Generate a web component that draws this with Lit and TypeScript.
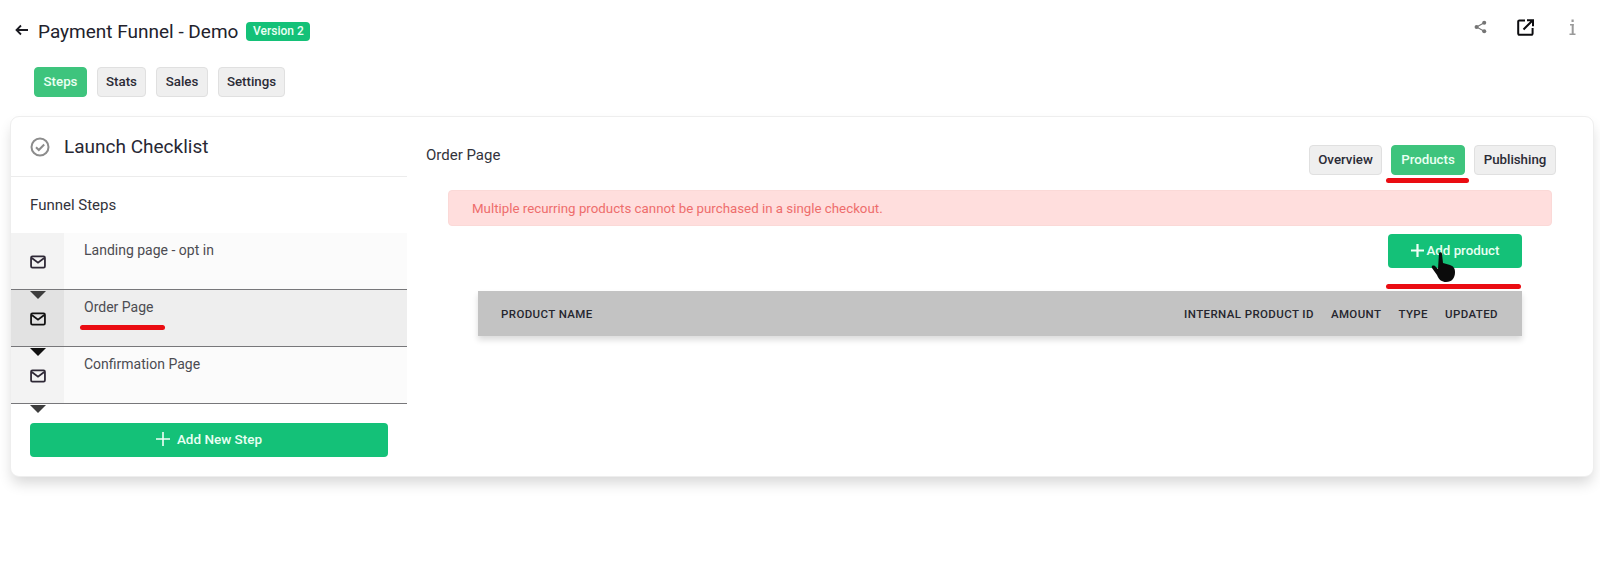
import { LitElement, css, html, svg } from "lit";
import { customElement } from "lit/decorators.js";

const mail = svg`<rect x="1.200" y="2.600" width="15.600" height="12.800" rx="1.500" fill="none" stroke="currentColor" stroke-width="2"/><path d="M2 4.500l7 5.200 7-5.200" fill="none" stroke="currentColor" stroke-width="2"/>`;

@customElement("app-root")
export class AppRoot extends LitElement {
  static styles = css`
    :host {
      display: block;
      height: 582px;
      background: #fff;
      font-family: Roboto, "Liberation Sans", sans-serif;
      color: #2a2a33;
      overflow: hidden;
    }
    .top {
      display: flex;
      align-items: center;
      height: 62px;
      padding: 0 0 0 15px;
    }
    .back { width: 13px; height: 12px; margin: -2px 10px 0 0; }
    .title { font-size: 19px; color: #22222c; }
    .badge {
      margin-left: 8px;
      height: 19px;
      width: 64px;
      border-radius: 4px;
      background: #14c178;
      color: #eafff4;
      font-size: 12px;
      font-weight: 500;
      display: flex;
      align-items: center;
      justify-content: center;
    }
    .top-icons {
      margin-left: auto;
      display: flex;
      align-items: center;
      padding-right: 24px;
      margin-top: -8px;
    }
    .share { margin-right: 30px; }
    .popout { margin-right: 35px; }
    .tabs { display: flex; gap: 10px; }
    .main-tabs { padding: 5px 0 0 34px; height: 50px; box-sizing: border-box; }
    .tab {
      height: 30px;
      box-sizing: border-box;
      padding-bottom: 2px;
      border: 1px solid #e0e0e0;
      border-radius: 4px;
      background: #efefef;
      color: #2b2b36;
      font-size: 13.300px;
      font-weight: 500;
      display: flex;
      align-items: center;
      justify-content: center;
    }
    .tab.on { background: #3ec47d; border-color: #3ec47d; color: #eafff2; }
    .card {
      position: relative;
      margin: 4px 6px 0 10px;
      height: 361px;
      box-sizing: border-box;
      border: 1px solid #eeeeee;
      border-radius: 9px;
      background: #fff;
      box-shadow: 0 8px 14px -2px rgba(0, 0, 0, 0.16);
      display: flex;
    }
    .left { width: 396px; flex: none; display: flex; flex-direction: column; }
    .check-head {
      display: flex;
      align-items: center;
      gap: 14px;
      height: 60px;
      box-sizing: border-box;
      padding-left: 19px;
      border-bottom: 1px solid #ececec;
      font-size: 19px;
      color: #282833;
    }
    .funnel {
      height: 56px;
      box-sizing: border-box;
      padding: 19px 0 0 19px;
      font-size: 15px;
      color: #33333b;
    }
    .step {
      position: relative;
      display: flex;
      height: 57px;
      box-sizing: border-box;
      border-bottom: 1.500px solid #77777a;
      background: #fbfbfb;
      font-size: 14px;
      color: #4c4c52;
    }
    .step.on { background: #eeeeee; }
    .step-icon {
      width: 53px;
      flex: none;
      background: #f3f3f3;
      display: flex;
      align-items: center;
      justify-content: center;
      padding-top: 2px;
      box-sizing: border-box;
      color: #2e2836;
    }
    .step.on .step-icon { background: #e2e2e2; color: #111; }
    .step-name { padding: 9px 0 0 20px; }
    .tri {
      position: absolute;
      left: 19px;
      bottom: -10px;
      width: 0;
      height: 0;
      border-left: 8px solid transparent;
      border-right: 8px solid transparent;
      border-top: 8px solid #3d3d3d;
      z-index: 1;
    }
    .step.on .tri { border-top-color: #111; }
    .add-step {
      margin: 19px 0 0 19px;
      width: 358px;
      height: 34px;
      box-sizing: border-box;
      padding-bottom: 2px;
      border-radius: 4px;
      background: #14c178;
      color: #e9fff3;
      font-size: 13.500px;
      font-weight: 500;
      display: flex;
      align-items: center;
      justify-content: center;
      gap: 7px;
    }
    .right { flex: 1; min-width: 0; padding: 28px 0 0 19px; }
    .right-head { display: flex; justify-content: space-between; padding-right: 37px; height: 45px; }
    .right-title { font-size: 15px; color: #33333b; padding-top: 1px; }
    .alert {
      margin: 0 41px 0 22px;
      height: 36px;
      box-sizing: border-box;
      border: 1px solid #fbd9d7;
      border-radius: 4px;
      background: #ffdedd;
      color: #ee6d6c;
      font-size: 13.300px;
      display: flex;
      align-items: center;
      padding-left: 23px;
    }
    .add-row { display: flex; justify-content: flex-end; padding: 8px 71px 0 0; }
    .add-product {
      width: 134px;
      height: 34px;
      box-sizing: border-box;
      padding-bottom: 2px;
      border-radius: 4px;
      background: #14c178;
      color: #e9fff3;
      font-size: 13.300px;
      font-weight: 500;
      display: flex;
      align-items: center;
      justify-content: center;
      gap: 3px;
    }
    .thead {
      margin: 23px 71px 0 52px;
      height: 45px;
      background: #c3c3c3;
      box-shadow: 0 4px 6px rgba(0, 0, 0, 0.14);
      display: flex;
      align-items: center;
      padding: 0 24px 0 23px;
      font-size: 11.500px;
      font-weight: 500;
      letter-spacing: 0.400px;
      color: #26262e;
      gap: 17px;
    }
    .thead .grow { flex: 1; }
    .mark { position: absolute; height: 5px; border-radius: 3px; background: #ea0c12; z-index: 2; }
    .cursor { position: absolute; left: 1430px; top: 251px; z-index: 3; }
    .wrap { position: relative; }
  `;

  render() {
    return html`
      <div class="wrap">
        <div class="top">
          <svg class="back" viewBox="0 0 13 12"><path d="M13 6H2M6 1.500L1.500 6 6 10.500" fill="none" stroke="#1b1b22" stroke-width="1.800"/></svg>
          <span class="title">Payment Funnel - Demo</span>
          <span class="badge">Version 2</span>
          <div class="top-icons">
            <svg class="share" width="13" height="14" viewBox="0 0 14 14">
              <circle cx="11" cy="2.500" r="2.200" fill="#757575"/><circle cx="2.800" cy="7" r="2.200" fill="#757575"/><circle cx="11" cy="11.500" r="2.200" fill="#757575"/>
              <path d="M11 2.500L2.800 7 11 11.500" fill="none" stroke="#757575" stroke-width="1.200"/>
            </svg>
            <svg class="popout" width="17" height="17" viewBox="0 0 17 17" fill="none" stroke="#0c0c0f" stroke-width="2">
              <path d="M8 1.400H2.400a1.200 1.200 0 0 0-1.200 1.200v12a1.200 1.200 0 0 0 1.200 1.200h12a1.200 1.200 0 0 0 1.200-1.200V9"/>
              <path d="M6.500 10.500L15 2M10 1.200h6v6"/>
            </svg>
            <svg width="7" height="17" viewBox="0 0 7 17" fill="#9a9a9a">
              <rect x="2.500" y="0.500" width="2.200" height="2.500"/><rect x="1" y="5" width="3.700" height="1.500"/><rect x="2.700" y="5" width="2" height="10"/><rect x="0.500" y="14.500" width="6" height="1.500"/>
            </svg>
          </div>
        </div>
        <div class="tabs main-tabs">
          <div class="tab on" style="width:53px">Steps</div>
          <div class="tab" style="width:49px">Stats</div>
          <div class="tab" style="width:52px">Sales</div>
          <div class="tab" style="width:67px">Settings</div>
        </div>
        <div class="card">
          <div class="left">
            <div class="check-head">
              <svg width="20" height="20" viewBox="0 0 20 20" fill="none" stroke="#8c8c8c" stroke-width="2">
                <circle cx="10" cy="10" r="8.500"/><path d="M6 10.200l2.800 2.800L14.200 7.500"/>
              </svg>
              <span>Launch Checklist</span>
            </div>
            <div class="funnel">Funnel Steps</div>
            ${["Landing page - opt in", "Order Page", "Confirmation Page"].map(
              (name, i) => html`
                <div class="step ${i === 1 ? "on" : ""}">
                  <div class="step-icon">
                    <svg width="16" height="16" viewBox="0 0 18 18">${mail}</svg>
                  </div>
                  <div class="step-name">${name}</div>
                  <div class="tri"></div>
                </div>
              `
            )}
            <div class="add-step">
              <svg width="14" height="14" viewBox="0 0 14 14"><path d="M7 0v14M0 7h14" stroke="#f0fff7" stroke-width="1.600"/></svg>
              Add New Step
            </div>
          </div>
          <div class="right">
            <div class="right-head">
              <div class="right-title">Order Page</div>
              <div class="tabs" style="gap:9px">
                <div class="tab" style="width:73px">Overview</div>
                <div class="tab on" style="width:74px">Products</div>
                <div class="tab" style="width:82px">Publishing</div>
              </div>
            </div>
            <div class="alert">Multiple recurring products cannot be purchased in a single checkout.</div>
            <div class="add-row">
              <div class="add-product">
                <svg width="13" height="13" viewBox="0 0 13 13"><path d="M6.500 0v13M0 6.500h13" stroke="#f0fff7" stroke-width="2.200"/></svg>
                Add product
              </div>
            </div>
            <div class="thead">
              <span class="grow">PRODUCT NAME</span>
              <span>INTERNAL PRODUCT ID</span>
              <span>AMOUNT</span>
              <span>TYPE</span>
              <span>UPDATED</span>
            </div>
          </div>
        </div>
        <div class="mark" style="left:80px;top:325px;width:85px"></div>
        <div class="mark" style="left:1386px;top:178px;width:83px"></div>
        <div class="mark" style="left:1386px;top:284px;width:135px"></div>
        <svg class="cursor" width="28" height="34" viewBox="0 0 28 34">
          <path d="M9 2c1-1.500 3-1 3 1l1 9 7 2c3 1 5 3 5 7 0 6-3 10-9 10-4 0-7-2-9-7L2 17c-1-2 1-3 3-2l3 3z" fill="#0b0b0b"/>
        </svg>
      </div>
    `;
  }
}
